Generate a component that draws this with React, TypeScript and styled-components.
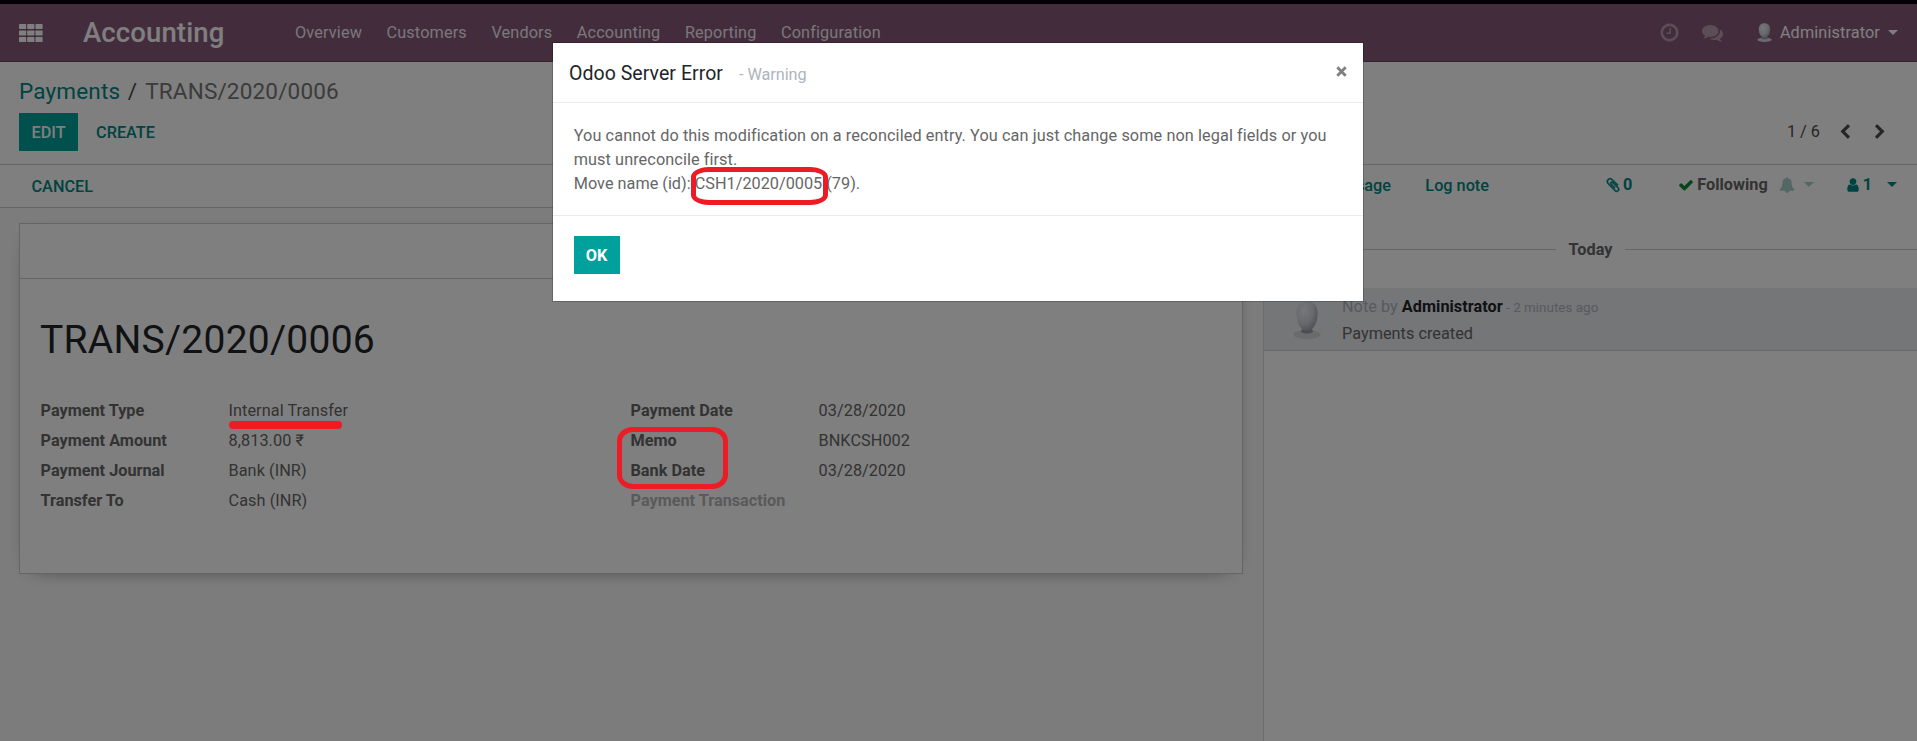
import React from "react";
import styled, { createGlobalStyle } from "styled-components";

const GlobalStyle = createGlobalStyle`
  * { box-sizing: border-box; }
  body {
    margin: 0;
    font-family: Roboto, "Liberation Sans", sans-serif;
    font-size: 16.25px;
    line-height: 24px;
    color: #666;
    background: #fff;
    overflow: hidden;
  }
`;

const ICONS = {
  clock:
    "M1024 544v448q0 14-9 23t-23 9h-320q-14 0-23-9t-9-23v-64q0-14 9-23t23-9h224v-352q0-14 9-23t23-9h64q14 0 23 9t9 23zm416 352q0-148-73-273t-198-198-273-73-273 73-198 198-73 273 73 273 198 198 273 73 273-73 198-198 73-273zm224 0q0 209-103 385.5t-279.5 279.5-385.5 103-385.5-103-279.5-279.5-103-385.5 103-385.5 279.5-279.5 385.5-103 385.5 103 279.5 279.5 103 385.5z",
  comments:
    "M1408 768q0 139-94 257t-256.5 186.5-353.5 68.5q-86 0-176-16-124 88-278 128-36 9-86 16h-3q-11 0-20.5-8t-11.5-21q-1-3-1-6.5t.5-6.5 2-6l2.5-5 3.5-5.5 4-5 4.5-5 4-4.5q5-6 23-25t26-29.5 22.5-29 25-38.5 20.5-44q-124-72-195-177t-71-224q0-139 94-257t256.5-186.5 353.5-68.5 353.5 68.5 256.5 186.5 94 257zm384 256q0 120-71 224.5t-195 176.5q10 24 20.5 44t25 38.5 22.5 29 26 29.5 23 25q1 1 4 4.5t4.5 5 4 5 3.5 5.5l2.5 5 2 6 .5 6.5-1 6.5q-3 14-13 22t-22 7q-50-7-86-16-154-40-278-128-90 16-176 16-271 0-472-132 58 4 88 4 161 0 309-45t264-129q125-92 192-212t67-254q0-77-23-152 129 71 204 178t75 230z",
  bell:
    "M912 1696q0-16-16-16-59 0-101.5-42.5t-42.5-101.5q0-16-16-16t-16 16q0 73 51.5 124.5t124.5 51.5q16 0 16-16zm816-288q0 52-38 90t-90 38h-448q0 106-75 181t-181 75-181-75-75-181h-448q-52 0-90-38t-38-90q50-42 91-88t85-119.5 74.5-158.5 50-206 19.5-260q0-152 117-282.5t307-158.5q-8-19-8-39 0-40 28-68t68-28 68 28 28 68q0 20-8 39 190 28 307 158.5t117 282.5q0 139 19.5 260t50 206 74.5 158.5 85 119.5 91 88z",
  check:
    "M1671 566q0 40-28 68l-724 724-136 136q-28 28-68 28t-68-28l-136-136-362-362q-28-28-28-68t28-68l136-136q28-28 68-28t68 28l294 295 656-657q28-28 68-28t68 28l136 136q28 28 28 68z",
  user:
    "M1536 1399q0 109-62.5 187t-150.5 78h-854q-88 0-150.5-78t-62.5-187q0-85 8.5-160.5t31.5-152 58.5-131 94-89 134.5-34.5q131 128 313 128t313-128q76 0 134.5 34.5t94 89 58.5 131 31.5 152 8.5 160.5zm-256-887q0 159-112.5 271.5t-271.5 112.5-271.5-112.5-112.5-271.5 112.5-271.5 271.5-112.5 271.5 112.5 112.5 271.5z",
  paperclip:
    "M1596 1385q0 117-79 196t-196 79q-135 0-235-100l-777-776q-113-115-113-271 0-159 110-270t269-111q158 0 273 113l605 606q10 10 10 22 0 16-30.5 46.5t-46.5 30.5q-13 0-23-10l-606-607q-79-77-181-77-106 0-179 75t-73 181q0 105 76 181l776 777q63 63 145 63 64 0 106-42t42-106q0-82-63-145l-581-581q-26-24-60-24-29 0-48 19t-19 48q0 32 25 59l410 410q10 10 10 22 0 16-31 47t-47 31q-12 0-22-10l-410-410q-63-61-63-149 0-82 57-139t139-57q88 0 149 63l581 581q100 98 100 235z",
  left:
    "M1427 301l-531 531 531 531q19 19 19 45t-19 45l-166 166q-19 19-45 19t-45-19l-742-742q-19-19-19-45t19-45l742-742q19-19 45-19t45 19l166 166q19 19 19 45t-19 45z",
  right:
    "M1363 877l-742 742q-19 19-45 19t-45-19l-166-166q-19-19-19-45t19-45l531-531-531-531q-19-19-19-45t19-45l166-166q19-19 45-19t45 19l742 742q19 19 19 45t-19 45z",
};

const Svg = styled.svg<{ $color?: string; $ml?: number; $bold?: boolean }>`
  display: block;
  flex: none;
  fill: ${(p) => p.$color || "currentColor"};
  stroke: ${(p) => (p.$bold ? "currentColor" : "none")};
  stroke-width: ${(p) => (p.$bold ? 75 : 0)};
  margin-left: ${(p) => p.$ml || 0}px;
`;

const CloseIcon = styled.svg`
  flex: none;
  margin: 0 0 3px;
  stroke: #7f7f7f;
  stroke-width: 2.8;
`;

type IconProps = { name: keyof typeof ICONS; size: number; color?: string; ml?: number; bold?: boolean };
const Icon = ({ name, size, color, ml, bold }: IconProps) => (
  <Svg viewBox="0 0 1792 1792" width={size} height={size} $color={color} $ml={ml} $bold={bold}>
    <path d={ICONS[name]} />
  </Svg>
);

const AppsIcon = () => (
  <Svg viewBox="0 0 24 18" width={24} height={18}>
    {[0, 6.4, 13].map((y) =>
      [0, 8.2, 16.4].map((x) => <rect key={`${x}-${y}`} x={x} y={y} width={7.2} height={5.1} rx={0.8} />)
    )}
  </Svg>
);

const Avatar = ({ width, height, id }: { width: number; height: number; id: string }) => (
  <Svg viewBox="0 0 28 38" width={width} height={height} preserveAspectRatio="none">
    <defs>
      <radialGradient id={id} cx="35%" cy="30%" r="75%">
        <stop offset="0" stopColor="#eceef0" />
        <stop offset="0.6" stopColor="#cfd3d9" />
        <stop offset="1" stopColor="#9ba0aa" />
      </radialGradient>
    </defs>
    <ellipse cx="14" cy="33.5" rx="13.5" ry="4.5" fill="#d3d6da" />
    <ellipse cx="14" cy="30" rx="6" ry="2.5" fill="#9499a3" />
    <path
      d="M14 0.5C7 0.5 3.4 5 3.4 12.5C3.4 21 7.5 30 14 30S24.6 21 24.6 12.5C24.6 5 21 0.5 14 0.5Z"
      fill={`url(#${id})`}
    />
  </Svg>
);

const Screen = styled.div`
  width: 1917px;
  height: 741px;
  display: flex;
  flex-direction: column;
  position: relative;
  overflow: hidden;
`;
const TopStrip = styled.div`
  height: 4px;
  flex: none;
  background: #000008;
`;
const Navbar = styled.header`
  height: 58px;
  flex: none;
  display: flex;
  align-items: center;
  padding: 0 19px 0 19px;
  background: #875a7b;
  border-bottom: 1px solid #68465f;
  color: #fff;
`;
const Brand = styled.div`
  width: 186px;
  margin-left: 40px;
  font-size: 27.5px;
  font-weight: 500;
  line-height: 40px;
  letter-spacing: 0.12px;
  padding-top: 1px;
`;
const Menu = styled.nav`
  display: flex;
  flex: 1;
  gap: 24.5px;
  margin-left: 26px;
  letter-spacing: 0.14px;
`;
const MenuItem = styled.a`
  color: rgba(255, 255, 255, 0.92);
`;
const Systray = styled.div`
  display: flex;
  align-items: center;
`;
const UserIcon = styled.div`
  margin-left: 34px;
`;
const UserName = styled.span`
  margin-left: 8px;
  letter-spacing: 0.12px;
`;
const Caret = styled.span<{ $ml: number; $color?: string }>`
  margin-left: ${(p) => p.$ml}px;
  margin-bottom: 1px;
  border: 5px solid transparent;
  border-top-color: ${(p) => p.$color || "currentColor"};
  border-bottom: 0;
`;
const ControlPanel = styled.section`
  height: 103px;
  flex: none;
  padding: 15px 29px 0 19px;
  border-bottom: 1px solid #ccc;
`;
const Breadcrumb = styled.div`
  font-size: 22.5px;
  line-height: 28px;
  color: #6c757d;
  letter-spacing: 0.17px;
`;
const Crumb = styled.span<{ $link?: boolean }>`
  color: ${(p) => (p.$link ? "#008784" : "#777")};
`;
const Slash = styled.span`
  margin: 0 8px 0 7.5px;
  color: #4c4c4c;
`;
const ActionRow = styled.div`
  display: flex;
  align-items: center;
  height: 38px;
  margin-top: 8px;
`;
const Button = styled.button<{ $primary?: boolean; $strong?: boolean }>`
  height: 38px;
  padding: 0 12.5px;
  border: 0;
  font: ${(p) => (p.$strong ? 700 : 500)} 16.25px Roboto, sans-serif;
  text-transform: uppercase;
  color: ${(p) => (p.$primary ? "#fff" : "#008784")};
  background: ${(p) => (p.$primary ? "#00a09d" : "transparent")};
`;
const CreateSlot = styled.div`
  flex: 1;
  margin-left: 5.5px;
`;
const Pager = styled.div`
  display: flex;
  align-items: center;
  color: #4c4c4c;
`;
const Body = styled.div`
  flex: 1;
  display: flex;
  min-height: 0;
`;
const FormView = styled.main`
  width: 1263px;
  display: flex;
  flex-direction: column;
  background: #f9f9f9;
`;
const StatusBar = styled.div`
  height: 43px;
  flex: none;
  padding: 2px 0 0 19px;
  background: #fff;
  border-bottom: 1px solid #ccc;
`;
const SheetArea = styled.div`
  flex: 1;
  padding: 15px 19px;
  background: #f9f9f9;
`;
const Sheet = styled.div`
  height: 351px;
  width: 1224px;
  background: #fff;
  border: 1px solid #c8c8d3;
  box-shadow: 0 5px 20px -15px #000;
`;
const SheetHeader = styled.div`
  height: 55px;
  border-bottom: 1px solid #c8cbd0;
`;
const SheetBody = styled.div`
  padding: 33px 20px 0;
`;
const Title = styled.h1`
  margin: 0;
  font-size: 39px;
  font-weight: 400;
  line-height: 56px;
  letter-spacing: 0.25px;
  color: #212529;
`;
const Groups = styled.div`
  display: flex;
  margin-top: 28px;
`;
const Group = styled.dl`
  width: 590px;
  margin: 0;
  display: grid;
  grid-template-columns: 188px 1fr;
  grid-auto-rows: 30px;
  line-height: 30px;
`;
const Label = styled.dt<{ $muted?: boolean }>`
  font-weight: 700;
  padding-left: 0.5px;
  color: ${(p) => (p.$muted ? "#b4b4b4" : "#666")};
`;
const Value = styled.dd`
  margin: 0;
  letter-spacing: 0.07px;
  padding-left: 0.5px;
  color: #666;
`;
const Chatter = styled.aside`
  flex: 1;
  border-left: 1px solid #dcdcdc;
  background: #fff;
`;
const ChatterTop = styled.div`
  height: 42px;
  display: flex;
  align-items: center;
  padding: 0 20px 3px 0;
  font-weight: 700;
  color: #008784;
`;
const ChatterLink = styled.span<{ $width: number }>`
  width: ${(p) => p.$width}px;
  text-align: right;
  white-space: nowrap;
  margin-top: 2px;
  font-weight: 500;
`;
const Follow = styled.div`
  display: flex;
  flex: 1;
  align-items: center;
  justify-content: flex-end;
`;
const Txt = styled.span<{ $ml: number; $color?: string }>`
  margin-left: ${(p) => p.$ml}px;
  color: ${(p) => p.$color || "inherit"};
`;
const DayLine = styled.div`
  display: flex;
  align-items: center;
  gap: 13px;
  height: 24px;
  margin-top: 30px;
  font-weight: 700;
  &::before,
  &::after {
    content: "";
    flex: 1;
    height: 1px;
    background: #ccc;
  }
`;
const DayLabel = styled.span`
  padding-top: 1px;
`;
const Message = styled.article`
  display: flex;
  height: 63px;
  margin-top: 27px;
  padding: 13px 0 0 29px;
  background: #e9ecef;
  border-bottom: 1px solid #ced4da;
`;
const MessageText = styled.div`
  margin: -7px 0 0 21px;
  line-height: 26px;
  letter-spacing: 0.03px;
`;
const Muted = styled.span<{ $small?: boolean }>`
  color: #adb5bd;
  font-size: ${(p) => (p.$small ? "13.4px" : "inherit")};
`;
const Author = styled.strong`
  color: #212529;
  font-weight: 700;
`;
const Backdrop = styled.div`
  position: absolute;
  inset: 0;
  background: rgba(0, 0, 0, 0.5);
`;
const Modal = styled.div`
  position: absolute;
  left: 552px;
  top: 42px;
  width: 812px;
  height: 260px;
  background: #fff;
  border: 1px solid rgba(0, 0, 0, 0.2);
  background-clip: padding-box;
`;
const ModalHeader = styled.div`
  height: 60px;
  display: flex;
  align-items: center;
  padding: 0 16px 0 16px;
  border-bottom: 1px solid #e9ecef;
`;
const ModalTitle = styled.div`
  flex: 1;
  padding-top: 3px;
  font-size: 19.5px;
  letter-spacing: 0.05px;
  color: #212529;
`;
const Subtitle = styled.small`
  margin-left: 16px;
  font-size: 16.25px;
  letter-spacing: -0.05px;
  color: #adb5bd;
`;
const ModalBody = styled.div`
  height: 113px;
  padding: 21px 20px 20px 20.75px;
  border-bottom: 1px solid #e9ecef;
`;
const Line = styled.div<{ $spacing: number }>`
  white-space: nowrap;
  letter-spacing: ${(p) => p.$spacing}px;
`;
const ModalFooter = styled.div`
  padding: 20px;
`;
const OkButton = styled(Button)`
  width: 46px;
  margin-left: 1px;
  padding: 0 1px 0 0;
`;
const Mark = styled.div<{ $x: number; $y: number; $w: number; $h: number; $r: string }>`
  position: absolute;
  left: ${(p) => p.$x}px;
  top: ${(p) => p.$y}px;
  width: ${(p) => p.$w}px;
  height: ${(p) => p.$h}px;
  border: 5px solid #ed1c24;
  border-radius: ${(p) => p.$r};
`;
const Underline = styled(Mark)`
  border: 0;
  background: #ed1c24;
`;

const menu = ["Overview", "Customers", "Vendors", "Accounting", "Reporting", "Configuration"];
const leftFields = [
  ["Payment Type", "Internal Transfer"],
  ["Payment Amount", "8,813.00 ₹"],
  ["Payment Journal", "Bank (INR)"],
  ["Transfer To", "Cash (INR)"],
];
const rightFields = [
  ["Payment Date", "03/28/2020"],
  ["Memo", "BNKCSH002"],
  ["Bank Date", "03/28/2020"],
  ["Payment Transaction", ""],
];

const Fields = ({ rows }: { rows: string[][] }) => (
  <Group>
    {rows.map(([label, value]) => (
      <React.Fragment key={label}>
        <Label $muted={!value}>{label}</Label>
        <Value>{value}</Value>
      </React.Fragment>
    ))}
  </Group>
);

export default function App() {
  return (
    <Screen>
      <GlobalStyle />
      <TopStrip />
      <Navbar>
        <AppsIcon />
        <Brand>Accounting</Brand>
        <Menu>
          {menu.map((m) => (
            <MenuItem key={m}>{m}</MenuItem>
          ))}
        </Menu>
        <Systray>
          <Icon name="clock" size={21} color="rgba(255,255,255,.4)" />
          <Icon name="comments" size={21} color="rgba(255,255,255,.4)" ml={22} />
          <UserIcon>
            <Avatar width={15} height={19} id="user-avatar" />
          </UserIcon>
          <UserName>Administrator</UserName>
          <Caret $ml={8} />
        </Systray>
      </Navbar>
      <ControlPanel>
        <Breadcrumb>
          <Crumb $link>Payments</Crumb>
          <Slash>/</Slash>
          <Crumb>TRANS/2020/0006</Crumb>
        </Breadcrumb>
        <ActionRow>
          <Button $primary>Edit</Button>
          <CreateSlot>
            <Button>Create</Button>
          </CreateSlot>
          <Pager>
            <span>1 / 6</span>
            <Icon name="left" size={16} ml={17} />
            <Icon name="right" size={16} ml={19} />
          </Pager>
        </ActionRow>
      </ControlPanel>
      <Body>
        <FormView>
          <StatusBar>
            <Button>Cancel</Button>
          </StatusBar>
          <SheetArea>
            <Sheet>
              <SheetHeader />
              <SheetBody>
                <Title>TRANS/2020/0006</Title>
                <Groups>
                  <Fields rows={leftFields} />
                  <Fields rows={rightFields} />
                </Groups>
              </SheetBody>
            </Sheet>
          </SheetArea>
        </FormView>
        <Chatter>
          <ChatterTop>
            <ChatterLink $width={127}>Send message</ChatterLink>
            <ChatterLink $width={98}>Log note</ChatterLink>
            <Follow>
              <Icon name="paperclip" size={16} bold />
              <Txt $ml={2}>0</Txt>
              <Icon name="check" size={16} color="#108a3a" ml={46} />
              <Txt $ml={3} $color="#666">Following</Txt>
              <Icon name="bell" size={16} color="#a5cecd" ml={11} />
              <Caret $ml={9} $color="#a5cecd" />
              <Icon name="user" size={16} ml={31} />
              <Txt $ml={2}>1</Txt>
              <Caret $ml={15} />
            </Follow>
          </ChatterTop>
          <DayLine>
            <DayLabel>Today</DayLabel>
          </DayLine>
          <Message>
            <Avatar width={28} height={38} id="message-avatar" />
            <MessageText>
              <div>
                <Muted>Note by </Muted>
                <Author>Administrator</Author>
                <Muted $small> - 2 minutes ago</Muted>
              </div>
              <div>Payments created</div>
            </MessageText>
          </Message>
        </Chatter>
      </Body>
      <Backdrop />
      <Modal role="dialog">
        <ModalHeader>
          <ModalTitle>
            Odoo Server Error<Subtitle>- Warning</Subtitle>
          </ModalTitle>
          <CloseIcon viewBox="0 0 11 11" width={11} height={11}>
            <path d="M1.3 1.3L9.7 9.7M9.7 1.3L1.3 9.7" />
          </CloseIcon>
        </ModalHeader>
        <ModalBody>
          <Line $spacing={0.09}>
            You cannot do this modification on a reconciled entry. You can just change some non legal fields or you
          </Line>
          <Line $spacing={0.08}>must unreconcile first.</Line>
          <Line $spacing={0.01}>Move name (id): CSH1/2020/0005 (79).</Line>
        </ModalBody>
        <ModalFooter>
          <OkButton $primary $strong>OK</OkButton>
        </ModalFooter>
      </Modal>
      <Mark $x={691} $y={167} $w={137} $h={38} $r="18px / 10px" />
      <Mark $x={617} $y={427} $w={111} $h={62} $r="16px / 14px" />
      <Underline $x={229} $y={421} $w={113} $h={8} $r="4px" />
    </Screen>
  );
}
